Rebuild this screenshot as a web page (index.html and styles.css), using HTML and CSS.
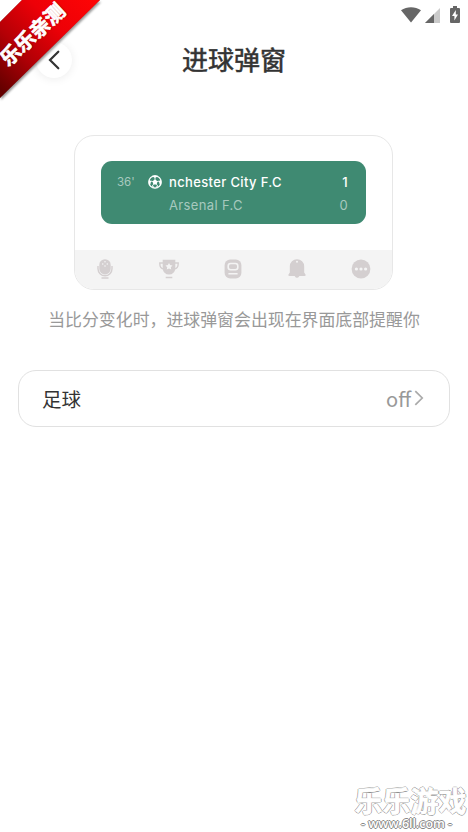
FILE: index.html
```html
<!DOCTYPE html>
<html lang="zh-CN">
<head>
<meta charset="utf-8">
<meta name="viewport" content="width=device-width, initial-scale=1">
<title>进球弹窗</title>
<link rel="stylesheet" href="styles.css">
</head>
<body>
<div class="screen">
  <div class="status">
    <svg width="20" height="16" viewBox="0 0 20 16"><path d="M0 3.2C6-.8 14-.8 20 3.2L10 15.6Z"/></svg>
    <svg width="15" height="15" viewBox="0 0 15 15"><path d="M0 15L15 0V15Z" opacity=".35"/><path d="M0 15L9 6V15Z"/></svg>
    <svg class="battery" width="10" height="17" viewBox="0 0 10 17"><path d="M3 0h4v2h2q1 0 1 1v13q0 1-1 1H1q-1 0-1-1V3q0-1 1-1h2Z"/><path d="M5.8 4L2 10h2.4v4.5L8 8.4H5.8Z" fill="#fff"/></svg>
  </div>
  <header class="header">
    <button class="back" aria-label="返回"><svg width="12" height="20" viewBox="0 0 12 20"><path d="M10.3 1.7L2 10l8.3 8.3"/></svg></button>
    <h1>进球弹窗</h1>
  </header>
  <section class="preview">
    <div class="stage">
      <div class="score">
        <span class="minute">36'</span>
        <svg class="ball" width="14" height="14" viewBox="0 0 14 14"><circle cx="7" cy="7" r="6.2" fill="none" stroke="#fff" stroke-width="1.3"/><path d="M7 4.4l2.6 1.9-1 3.1H5.4l-1-3.1ZM3.6.9L7 2.9 10.4.9 7 .2ZM.7 4.6l2.4 1.6-.8 3.4L.7 9ZM13.3 4.6l-2.4 1.6.8 3.4 1.6-.6ZM3 11l3 .6.6 1.8ZM11 11l-3 .6-.6 1.8Z" fill="#fff"/><path d="M7 2.5v2.5M2.6 6l2.2.6M11.4 6l-2.2.6M5.6 9.2L4 11.4M8.4 9.2l1.6 2.2" stroke="#fff" stroke-width=".9"/></svg>
        <span class="home">nchester City F.C</span><span class="goal">1</span>
        <span class="away">Arsenal F.C</span><span class="goal lost">0</span>
      </div>
    </div>
    <div class="tabs">
      <svg viewBox="0 0 20 20"><rect x="4.3" y=".2" width="11.4" height="15.3" rx="5.7"/><path d="M3 7v2.8a7 7 0 0 0 14 0V7" class="line"/><path d="M6.5 19h7" class="line"/><g class="hole"><circle cx="10" cy="2.8" r=".8"/><circle cx="7.7" cy="5" r=".8"/><circle cx="12.3" cy="5" r=".8"/><circle cx="10" cy="7" r=".8"/></g></svg>
      <svg viewBox="0 0 20 20"><path d="M3.7.8h12.6v8.4a6.3 6.3 0 0 1-12.6 0Z"/><path d="M4 4H.8Q.6 9.5 4.5 10M16 4h3.2q.2 5.5-3.7 6M6.7 18.5h6.6" class="line"/><path d="M10 4l1.1 2.1 2.4.4-1.7 1.7.4 2.4-2.2-1.1-2.2 1.1.4-2.4-1.7-1.7 2.4-.4Z" class="hole"/></svg>
      <svg viewBox="0 0 20 20"><rect x="1.6" y=".6" width="16.8" height="18.8" rx="5.5"/><rect x="5.2" y="4.5" width="9.6" height="6.2" rx="2.4" class="cut"/><path d="M5.4 14.8h9.2" class="cut"/></svg>
      <svg viewBox="0 0 20 20"><path d="M2.8 7.4a7.2 7.2 0 0 1 14.4 0v6.2l1.3 2q.5 1.4-1 1.4h-5.1Q10 20.7 7.6 17H2.5q-1.5 0-1-1.4l1.3-2Z"/><circle cx="10" cy="2.8" r="1" class="hole"/></svg>
      <svg viewBox="0 0 20 20"><circle cx="10" cy="10" r="9.4"/><g class="hole"><circle cx="5.4" cy="10" r="1.6"/><circle cx="10" cy="10" r="1.6"/><circle cx="14.6" cy="10" r="1.6"/></g></svg>
    </div>
  </section>
  <p class="caption">当比分变化时，进球弹窗会出现在界面底部提醒你</p>
  <div class="setting"><span>足球</span><span class="value">off<svg width="10" height="16" viewBox="0 0 10 16"><path d="M1.3 1.2L8.2 8l-6.9 6.8"/></svg></span></div>
</div>
<div class="ribbon">
  <svg width="104" height="104" viewBox="0 0 104 104"><defs><linearGradient id="red" x1="0" y1="1" x2="1" y2="0"><stop offset=".05" stop-color="#650000"/><stop offset=".35" stop-color="#b40006"/><stop offset=".65" stop-color="#ed0007"/><stop offset="1" stop-color="#ff0505"/></linearGradient></defs><path class="shade" d="M22 0H100L0 98V22Z"/><path d="M22 0H100L0 98V22Z" fill="url(#red)"/></svg>
  <span>乐乐亲测</span>
</div>
<div class="watermark"><strong>乐乐游戏</strong><span>- www.6ll.com -</span></div>
</body>
</html>
```
FILE: styles.css
```css
* { box-sizing: border-box; }
body {
  margin: 0;
  background: #fff;
  color: #333;
  font-family: Roboto, "Noto Sans CJK SC", sans-serif;
}
.screen {
  height: 832px;
  display: flex;
  flex-direction: column;
  overflow: hidden;
}
.status {
  height: 30px;
  padding: 7px 8px 0 0;
  display: flex;
  justify-content: flex-end;
  gap: 4px;
  fill: #666;
}
.status svg + svg { margin-top: 1px; }
.status .battery { margin: -1px 0 0 6px; }
.header {
  height: 60px;
  padding: 0 36px;
  display: grid;
  grid-template-columns: 36px 1fr 36px;
  align-items: center;
}
.back {
  width: 36px;
  height: 36px;
  padding: 0;
  border: 0;
  border-radius: 50%;
  background: #fff;
  box-shadow: 0 1px 10px rgba(0, 0, 0, .08);
  display: grid;
  place-items: center;
}
.back path {
  fill: none;
  stroke: #333;
  stroke-width: 2.2;
  stroke-linecap: round;
}
h1 {
  margin: 2px 0 0;
  text-align: center;
  font-size: 26px;
  line-height: 40px;
  font-weight: 400;
  -webkit-text-stroke: .55px #333;
}
.preview {
  width: 319px;
  height: 155px;
  margin: 45px 0 0 74px;
  border: 1px solid #e7e7e7;
  border-radius: 20px;
  overflow: hidden;
  flex-shrink: 0;
}
.stage {
  height: 114px;
  padding: 25px 26px 0;
}
.score {
  height: 63px;
  padding: 10px 18px 8px 16px;
  border-radius: 11px;
  background: #3f8a72;
  color: #fff;
  display: grid;
  grid-template: 22px 23px / 31px 21px 1fr auto;
  align-items: center;
  font-family: Inter, sans-serif;
  font-size: 13px;
  letter-spacing: .36px;
}
.minute {
  color: #a7c9be;
  font-size: 11.5px;
  letter-spacing: 0;
}
.home, .goal { font-weight: 500; }
.away { grid-column: 3; }
.away, .lost {
  color: #a7c9be;
  font-weight: 400;
}
.goal { text-align: right; }
.tabs {
  height: 40px;
  padding: 0 21px 2px 20px;
  background: #f4f4f4;
  display: flex;
  align-items: center;
  justify-content: space-between;
}
.tabs svg {
  width: 20px;
  height: 20px;
  fill: #d4cfd0;
}
.tabs .line {
  fill: none;
  stroke: #d4cfd0;
  stroke-width: 1.4;
}
.tabs .hole { fill: #f4f4f4; }
.tabs .cut {
  fill: none;
  stroke: #f4f4f4;
  stroke-width: 1.6;
}
.caption {
  margin: 17px 0 0;
  height: 26px;
  font-size: 16.9px;
  line-height: 26px;
  text-align: center;
  color: #999;
  white-space: nowrap;
}
.setting {
  height: 57px;
  margin: 37px 18px 0;
  padding: 0 25px 1px 23px;
  border: 1px solid #e1e1e1;
  border-radius: 18px;
  display: flex;
  align-items: center;
  justify-content: space-between;
  font-size: 19.5px;
  flex-shrink: 0;
}
.value {
  display: flex;
  align-items: center;
  gap: 3px;
  font-family: "Noto Sans CJK SC", sans-serif;
  font-size: 20px;
  color: #999;
}
.value path {
  fill: none;
  stroke: #aaa;
  stroke-width: 1.7;
}
.ribbon {
  position: absolute;
  top: 0;
  left: 0;
  width: 104px;
  height: 104px;
}
.ribbon svg { display: block; }
.shade {
  fill: #777;
  filter: drop-shadow(1px 2px 1px rgba(0, 0, 0, .4));
}
.ribbon span {
  position: absolute;
  left: -8px;
  top: 23px;
  width: 80px;
  text-align: center;
  transform: rotate(-43deg);
  color: #fff;
  font: 700 20px/22px "Noto Sans CJK SC", sans-serif;
  -webkit-text-stroke: .7px #fff;
  text-shadow: 1px 1px 1px rgba(0, 0, 0, .3);
}
.watermark {
  position: absolute;
  right: 0;
  bottom: 1px;
  width: 115px;
  height: 48px;
  display: flex;
  flex-direction: column;
  align-items: center;
  color: #fff;
  white-space: nowrap;
  font-family: "Noto Sans CJK SC", sans-serif;
}
.watermark strong {
  font-size: 28px;
  line-height: 34px;
  font-weight: 700;
  -webkit-text-stroke: .8px #fff;
  text-shadow: 1px 0 .5px #888, -1px 0 .5px #888, 0 1px .5px #888, 0 -1px .5px #888;
}
.watermark span {
  margin-right: 8px;
  font: 600 12.4px/14px "Open Sans", sans-serif;
  text-shadow: 1px 0 .5px #888, -1px 0 .5px #888, 0 1px .5px #888, 0 -1px .5px #888;
}
```
